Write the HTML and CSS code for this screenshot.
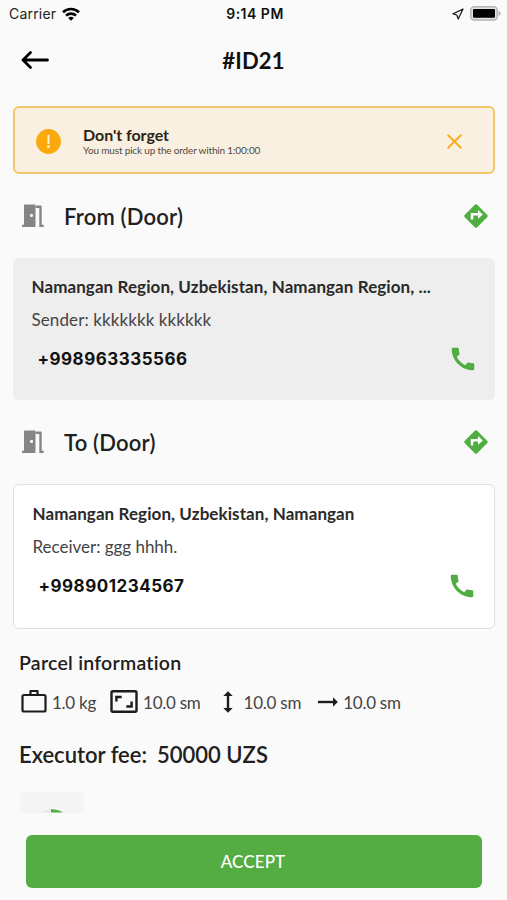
FILE: index.html
```html
<!DOCTYPE html>
<html lang="en">
<head>
    <meta charset="utf-8">
    <title>Order #ID21</title>
    <link rel="stylesheet" href="styles.css">
</head>
<body>

    <div class="status-bar">
        <div class="carrier">
            <span>Carrier</span>
            <svg width="18" height="14" viewBox="0 0 18 14" fill="none" stroke="#000" stroke-width="2.6">
                <path d="M1 5.2a11.5 11.5 0 0 1 16 0"/>
                <path d="M4 8.6a7.2 7.2 0 0 1 10 0"/>
                <path d="M9 13.8L6.2 11a4 4 0 0 1 5.6 0z" fill="#000" stroke="none"/>
            </svg>
        </div>
        <span class="time">9:14 PM</span>
        <div class="status-icons">
            <svg width="12" height="12" viewBox="0 0 12 12" fill="none" stroke="#222" stroke-width="1.3" stroke-linejoin="round">
                <path d="M11 1L1 5.8l3.800 1.200L6.200 11z"/>
            </svg>
            <svg width="31" height="15" viewBox="0 0 31 15">
                <rect x=".8" y=".8" width="26.4" height="13.2" rx="3.5" fill="#e4e4e4" stroke="#b4b4b4" stroke-width="1.5"/>
                <rect x="3" y="3" width="22" height="8.8" rx="1" fill="#000"/>
                <path d="M28.5 5v5q2.3-.8 2.3-2.5T28.5 5z" fill="#b4b4b4"/>
            </svg>
        </div>
    </div>

    <header class="app-bar">
        <svg class="back" width="28" height="20" viewBox="0 0 28 20" fill="none" stroke="#000" stroke-width="2.8" stroke-linecap="round" stroke-linejoin="round">
            <path d="M26.5 10H2M9.5 2.5L2 10l7.5 7.5"/>
        </svg>
        <h1>#ID21</h1>
    </header>

    <main>
        <div class="alert">
            <svg width="25" height="25" viewBox="0 0 25 25">
                <circle cx="12.5" cy="12.5" r="12.4" fill="#fca90c"/>
                <path d="M12.5 6.8v7.2" stroke="#fff3dc" stroke-width="2" stroke-linecap="round"/>
                <circle cx="12.5" cy="17.7" r="1.4" fill="#fff3dc"/>
            </svg>
            <div class="alert-text">
                <h3>Don't forget</h3>
                <p>You must pick up the order within 1:00:00</p>
            </div>
            <svg width="15" height="15" viewBox="0 0 15 15" fill="none" stroke="#f9ad1d" stroke-width="2" stroke-linecap="round">
                <path d="M1.200 1.200l12.600 12.600M13.800 1.200L1.200 13.800"/>
            </svg>
        </div>

        <div class="section-head">
            <svg width="22" height="24" viewBox="0 0 22 24" fill="#858585">
                <path fill-rule="evenodd" d="M2 1.500q0-1 1-1h9.500q1 0 1 1V23H0v-2.200h2zM9.500 9.800a1.600 1.600 0 1 0 0 3.200a1.600 1.600 0 0 0 0-3.200z"/>
                <path d="M13.500 1.500h5.200q1 0 1 1v18.300h2V23h-4.400V3.900h-3.800z"/>
            </svg>
            <h2>From (Door)</h2>
            <svg width="26" height="26" viewBox="0 0 26 26">
                <rect x="4.300" y="4.300" width="17.400" height="17.400" rx="1.300" transform="rotate(45 13 13)" fill="#50ad42"/>
                <path d="M9 16.500v-5.200h8" fill="none" stroke="#fff" stroke-width="2.500"/>
                <path d="M15 7l4.800 4.400l-4.800 4.400z" fill="#fff"/>
            </svg>
        </div>

        <div class="card card-from">
            <h4>Namangan Region, Uzbekistan, Namangan Region, ...</h4>
            <p>Sender: kkkkkkk kkkkkk</p>
            <div class="phone">
                <span>+998963335566</span>
                <svg width="30" height="30" viewBox="0 0 24 24" fill="#50ad42">
                    <path d="M20.010 15.380c-1.230 0-2.420-.2-3.530-.56a.977.977 0 0 0-1.010.24l-1.570 1.970c-2.830-1.350-5.480-3.900-6.890-6.830l1.950-1.660c.27-.28.350-.67.240-1.020-.37-1.110-.56-2.300-.56-3.530 0-.54-.45-.99-.99-.99H4.190C3.650 3 3 3.240 3 3.990 3 13.280 10.730 21 20.010 21c.71 0 .99-.63.99-1.180v-3.450c0-.54-.45-.99-.99-.99z"/>
                </svg>
            </div>
        </div>

        <div class="section-head">
            <svg width="22" height="24" viewBox="0 0 22 24" fill="#858585">
                <path fill-rule="evenodd" d="M2 1.500q0-1 1-1h9.500q1 0 1 1V23H0v-2.200h2zM9.500 9.800a1.600 1.600 0 1 0 0 3.200a1.600 1.600 0 0 0 0-3.200z"/>
                <path d="M13.500 1.500h5.200q1 0 1 1v18.300h2V23h-4.400V3.900h-3.800z"/>
            </svg>
            <h2>To (Door)</h2>
            <svg width="26" height="26" viewBox="0 0 26 26">
                <rect x="4.300" y="4.300" width="17.400" height="17.400" rx="1.300" transform="rotate(45 13 13)" fill="#50ad42"/>
                <path d="M9 16.500v-5.200h8" fill="none" stroke="#fff" stroke-width="2.500"/>
                <path d="M15 7l4.800 4.400l-4.800 4.400z" fill="#fff"/>
            </svg>
        </div>

        <div class="card card-to">
            <h4>Namangan Region, Uzbekistan, Namangan</h4>
            <p>Receiver: ggg hhhh.</p>
            <div class="phone">
                <span>+998901234567</span>
                <svg width="30" height="30" viewBox="0 0 24 24" fill="#50ad42">
                    <path d="M20.010 15.380c-1.230 0-2.420-.2-3.530-.56a.977.977 0 0 0-1.010.24l-1.570 1.970c-2.830-1.350-5.480-3.900-6.890-6.830l1.950-1.660c.27-.28.350-.67.240-1.020-.37-1.110-.56-2.300-.56-3.530 0-.54-.45-.99-.99-.99H4.190C3.650 3 3 3.240 3 3.990 3 13.280 10.730 21 20.010 21c.71 0 .99-.63.99-1.180v-3.450c0-.54-.45-.99-.99-.99z"/>
                </svg>
            </div>
        </div>

        <h3 class="parcel-title">Parcel information</h3>
        <div class="parcel">
            <svg class="weight" width="26" height="26" viewBox="0 0 26 26" fill="none" stroke="#1c1c1c" stroke-width="2.200" stroke-linejoin="round">
                <rect x="1.500" y="6" width="23" height="16.500" rx="1.500"/>
                <path d="M9.500 6V2h7v4"/>
            </svg>
            <span>1.0 kg</span>
            <svg class="size" width="28" height="24" viewBox="0 0 28 24" fill="none" stroke="#1c1c1c" stroke-width="2.400">
                <rect x="1.500" y="1.300" width="25" height="20.400" rx="1.500"/>
                <path d="M6.400 11.500V7h5.300M21.600 11.500v5h-5.300"/>
            </svg>
            <span>10.0 sm</span>
            <svg class="height" width="10" height="22" viewBox="0 0 10 22">
                <path d="M5 4v14" stroke="#1c1c1c" stroke-width="2.400"/>
                <path d="M5 .3L9.700 5H.3zM5 21.700L9.700 17H.3z" fill="#1c1c1c"/>
            </svg>
            <span>10.0 sm</span>
            <svg class="width" width="20" height="10" viewBox="0 0 20 10">
                <path d="M0 5h16" stroke="#1c1c1c" stroke-width="2.400"/>
                <path d="M15 .3L19.800 5L15 9.700z" fill="#1c1c1c"/>
            </svg>
            <span>10.0 sm</span>
        </div>

        <div class="fee">
            <span>Executor fee:</span>
            <span>50000 UZS</span>
        </div>

        <!-- top of the thumbnail, the rest is below the fold -->
        <div class="thumb">
            <svg width="64" height="21" viewBox="0 0 64 21">
                <path d="M31 17.500v3H20q4.500-2.400 11-3z" fill="#e6e6e6"/>
                <path d="M31 17q7 .3 12.500 3.500H31z" fill="#50ad42"/>
            </svg>
        </div>
    </main>

    <footer>
        <button>ACCEPT</button>
    </footer>

</body>
</html>
```
FILE: styles.css
```css
* {
    box-sizing: border-box;
}

body {
    margin: 0;
    height: 900px;
    display: flex;
    flex-direction: column;
    overflow: hidden;
    background-color: #fafafa;
    color: #202020;
    font-family: Lato, sans-serif;
}

h1, h2, h3, h4, p {
    margin: 0;
}

svg {
    display: block;
    flex: none;
}

.status-bar {
    height: 27px;
    padding: 0 6px 0 9px;
    display: grid;
    grid-template-columns: 1fr auto 1fr;
    align-items: center;
    font-family: Inter, sans-serif;
    font-size: 14px;
    letter-spacing: 0.2px;
    color: #222;
}

.carrier {
    display: flex;
    align-items: center;
    gap: 6px;
}

.time {
    font-weight: 600;
    letter-spacing: 0.5px;
    color: #111;
}

.status-icons {
    display: flex;
    justify-content: flex-end;
    align-items: center;
    gap: 6px;
}

.app-bar {
    height: 65px;
    padding: 0 21px;
    display: grid;
    grid-template-columns: 1fr auto 1fr;
    align-items: center;
}

h1 {
    padding-top: 1px;
    font-size: 22px;
    font-weight: 700;
    letter-spacing: 0.2px;
    color: #111;
}

main {
    height: 721px;
    padding: 14px 12px 0 13px;
    overflow: hidden;
}

.alert {
    height: 68px;
    padding: 2px 31px 0 21px;
    display: flex;
    align-items: center;
    background-color: #faf0e1;
    border: 2px solid #f4c66c;
    border-radius: 6px;
}

.alert-text {
    flex: 1;
    padding: 0 0 0 22px;
}

.alert h3 {
    font-size: 16px;
    line-height: 19px;
    font-weight: 700;
    letter-spacing: -0.05px;
    color: #2b2517;
}

.alert p {
    font-size: 10px;
    line-height: 13px;
    letter-spacing: -0.17px;
    color: #504a40;
}

.section-head {
    height: 84px;
    padding: 0 6.5px 0 9px;
    display: flex;
    align-items: center;
}

h2 {
    flex: 1;
    padding-left: 20px;
    font-size: 22px;
    font-weight: 600;
    letter-spacing: 0.2px;
}

.card {
    padding: 18px 17px 18px 18.5px;
    border-radius: 6px;
}

.card h4 {
    font-size: 17px;
    line-height: 22px;
    font-weight: 700;
    letter-spacing: 0.08px;
    color: #2a2a2a;
    white-space: nowrap;
}

.card p {
    margin-top: 11px;
    font-size: 17px;
    line-height: 22px;
    letter-spacing: 0.1px;
    color: #444;
}

.phone {
    margin-top: 13px;
    padding-left: 6px;
    display: flex;
    justify-content: space-between;
    align-items: center;
    font-family: Inter, sans-serif;
    font-size: 17px;
    font-weight: 700;
    letter-spacing: 0.5px;
    color: #111;
}

.card-from {
    height: 142px;
    background-color: #eee;
}

.card-to {
    height: 145px;
    background-color: #fff;
    border: 1.5px solid #e0e0e0;
}

.card-to p {
    letter-spacing: -0.02px;
}

.parcel-title {
    margin: 22px 0 0 6px;
    font-size: 19.5px;
    line-height: 24px;
    font-weight: 600;
    letter-spacing: 0.25px;
}

.parcel {
    height: 30px;
    margin: 12px 0 0 8px;
    display: flex;
    align-items: center;
    font-size: 17px;
    letter-spacing: -0.25px;
    color: #444;
}

.parcel span {
    margin-left: 5px;
}

.parcel .size {
    margin-left: 14px;
}

.parcel .height {
    margin-left: 22px;
}

.parcel .height + span {
    margin-left: 11px;
}

.parcel .width {
    margin-left: 17px;
}

.fee {
    margin: 23px 0 0 6px;
    display: flex;
    gap: 10px;
    font-size: 22px;
    line-height: 30px;
    font-weight: 600;
}

.thumb {
    width: 64px;
    height: 21px;
    margin: 22px 0 0 7px;
    background-color: #f5f5f5;
}

footer {
    padding: 22px 25px 12px 26px;
}

button {
    width: 100%;
    height: 53px;
    padding-right: 8px;
    border: none;
    border-radius: 6px;
    background-color: #53ad43;
    color: #fff;
    font-family: Lato, sans-serif;
    font-size: 17px;
    font-weight: 500;
    letter-spacing: 0.1px;
}
```
